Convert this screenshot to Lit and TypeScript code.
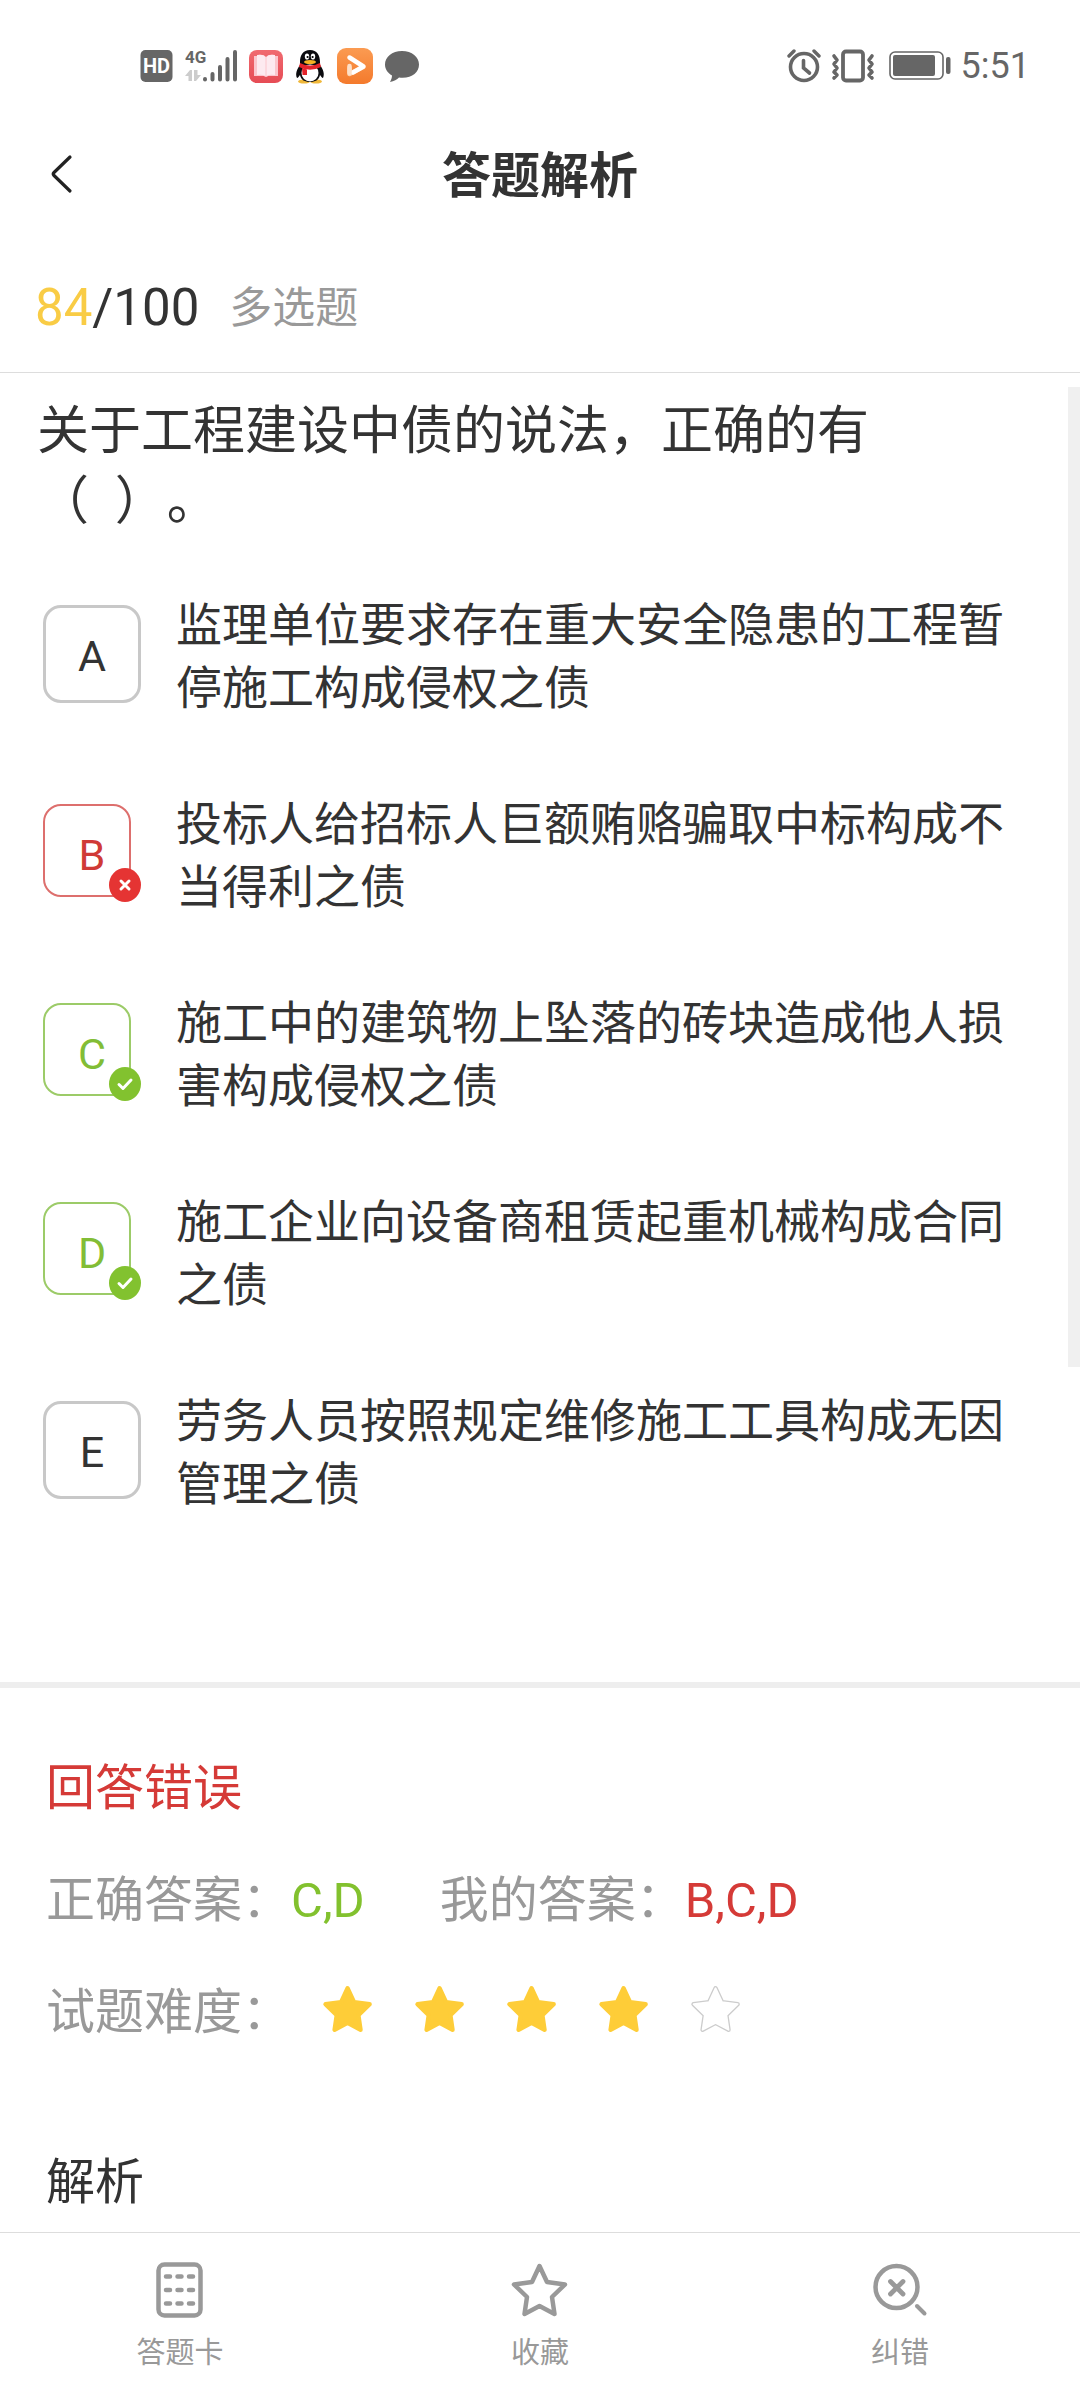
import { LitElement, html, svg, css, nothing } from "lit";
import { customElement, property } from "lit/decorators.js";
import { classMap } from "lit/directives/class-map.js";

type OptionState = "plain" | "wrong" | "right";

interface Option {
  key: string;
  text: string;
  state: OptionState;
}

const OPTIONS: Option[] = [
  { key: "A", text: "监理单位要求存在重大安全隐患的工程暂停施工构成侵权之债", state: "plain" },
  { key: "B", text: "投标人给招标人巨额贿赂骗取中标构成不当得利之债", state: "wrong" },
  { key: "C", text: "施工中的建筑物上坠落的砖块造成他人损害构成侵权之债", state: "right" },
  { key: "D", text: "施工企业向设备商租赁起重机械构成合同之债", state: "right" },
  { key: "E", text: "劳务人员按照规定维修施工工具构成无因管理之债", state: "plain" },
];

const STAR = "M29.5 6 L37 22 L55 24.5 L42 37 L44.5 54 L29.5 46 L14.5 54 L17 37 L4 24.5 L22 22 Z";

@customElement("status-bar")
export class StatusBar extends LitElement {
  static styles = css`
    :host {
      display: flex;
      justify-content: space-between;
      align-items: center;
      padding: 42px 50px 42px 140px;
      color: #666;
    }
    .group {
      display: flex;
      align-items: center;
      height: 48px;
    }
    .left {
      gap: 12px;
    }
    .right {
      gap: 10px;
    }
    svg {
      display: block;
    }
    .battery {
      margin-left: 4px;
    }
    .time {
      font-size: 36px;
      line-height: 48px;
    }
    .label {
      font-family: Roboto, sans-serif;
      font-weight: 700;
    }
  `;

  render() {
    return html`
      <div class="group left">
        <svg width="33" height="36" viewBox="0 0 33 36" aria-hidden="true">
          <rect x="0.5" y="2" width="32" height="32" rx="5" fill="#666" />
          <text class="label" x="16.5" y="25" font-size="20" text-anchor="middle" fill="#fff">HD</text>
        </svg>
        <svg width="52" height="36" viewBox="0 0 52 36" aria-hidden="true">
          <text class="label" x="0" y="15" font-size="17" fill="#666">4G</text>
          <g fill="#ccc">
            <path d="M5 22 L0 28 H3.500 V33 H7 V22 Z" />
            <path d="M9 22 V33 H11 L16 27 H12.500 V22 Z" />
          </g>
          <g stroke="#666" stroke-width="4" stroke-linecap="round">
            <path d="M20 31 V31.500 M27.500 26 V31.500 M35 19 V31.500 M42.500 11 V31.500 M50 4 V31.500" />
          </g>
        </svg>
        <svg width="34" height="36" viewBox="0 0 34 36" aria-hidden="true">
          <defs>
            <linearGradient id="book" x1="0" y1="0" x2="0" y2="1">
              <stop offset="0" stop-color="#f06a70" />
              <stop offset="1" stop-color="#e64c55" />
            </linearGradient>
          </defs>
          <rect x="0" y="2" width="34" height="33" rx="8" fill="url(#book)" />
          <path d="M5 8 H9 V7 Q15 6 17 9 Q19 6 25 7 V8 H29 V28 H19 Q17 30 15 28 H5 Z" fill="#fbc6cd" />
          <path d="M8 7 Q14 6 16.500 9 V28 Q13 26 8 27 Z M26 7 Q20 6 17.500 9 V28 Q21 26 26 27 Z" fill="#fdeaf0" />
        </svg>
        <svg width="30" height="36" viewBox="0 0 30 36" aria-hidden="true">
          <ellipse cx="9" cy="33.500" rx="6" ry="2" fill="#f0b83a" />
          <ellipse cx="21" cy="33.500" rx="6" ry="2" fill="#f0b83a" />
          <path d="M15 2 C8 2 5 7 5 14 L5 17 C2 21 0 26 2 30 C3 30 4 28 5 27 C6 32 10 34 15 34 C20 34 24 32 25 27 C26 28 27 30 28 30 C30 26 28 21 25 17 L25 14 C25 7 22 2 15 2 Z" fill="#0b0b0f" />
          <ellipse cx="15" cy="25" rx="8.500" ry="8.500" fill="#fff" />
          <path d="M5 15 Q15 20 25 15 L26 19 Q15 24.500 4 19 Z" fill="#e3242b" />
          <path d="M7 20 L12 21.500 V27 H7.500 Z" fill="#e3242b" />
          <ellipse cx="12" cy="8.500" rx="2.200" ry="3.100" fill="#fff" />
          <ellipse cx="18" cy="8.500" rx="2.200" ry="3.100" fill="#fff" />
          <circle cx="12.600" cy="9" r="1.100" fill="#000" />
          <circle cx="17.600" cy="9" r="1.100" fill="#000" />
          <ellipse cx="15" cy="14" rx="6" ry="2" fill="#f5b324" />
        </svg>
        <svg width="36" height="36" viewBox="0 0 36 36" aria-hidden="true">
          <defs>
            <linearGradient id="play" x1="0" y1="0" x2="0" y2="1">
              <stop offset="0" stop-color="#fb9b52" />
              <stop offset="1" stop-color="#f47a2c" />
            </linearGradient>
          </defs>
          <rect x="0" y="0" width="36" height="36" rx="9" fill="url(#play)" />
          <g fill="none" stroke-linecap="round" stroke-linejoin="round" stroke-width="4.500">
            <path d="M12.500 20 V26 L26 19" stroke="#fdd0ac" />
            <path d="M12.500 9.500 L26.500 18.500 L16 24.500" stroke="#fff" />
            <path d="M12.500 18 V25" stroke="#fde0c8" />
          </g>
        </svg>
        <svg width="34" height="36" viewBox="0 0 34 36" aria-hidden="true">
          <path d="M17 3 C7 3 0 9 0 16.500 C0 21 2.500 25 7 27.500 C7 30 6 32 5 34 C9 33.500 12 31.500 14 29.500 C26 31 34 25 34 16.500 C34 9 27 3 17 3 Z" fill="#666" />
        </svg>
      </div>
      <div class="group right">
        <svg width="34" height="36" viewBox="0 0 34 36" fill="none" stroke="#666" stroke-linecap="round" aria-hidden="true">
          <circle cx="17" cy="19" r="13.500" stroke-width="3.600" />
          <path d="M16.500 12.500 V20 L22.500 25" stroke-width="3.600" />
          <path d="M2 8 L7 3 M32 8 L27 3" stroke-width="3.400" />
        </svg>
        <svg width="44" height="36" viewBox="0 0 44 36" fill="none" stroke="#666" stroke-linecap="round" stroke-linejoin="round" aria-hidden="true">
          <rect x="12" y="3.500" width="20" height="29" rx="3" stroke-width="3.800" />
          <path d="M3 8 L6 12 L3 16 L6 20 L3 24 L6 27 L3 30 M41 8 L38 12 L41 16 L38 20 L41 24 L38 27 L41 30" stroke-width="3.600" />
        </svg>
        <svg class="battery" width="62" height="36" viewBox="0 0 62 36" aria-hidden="true">
          <rect x="1" y="4" width="53" height="27" rx="5" fill="none" stroke="#666" stroke-width="1.600" />
          <rect x="4" y="7" width="42" height="21" rx="2" fill="#666" />
          <rect x="57" y="9" width="4.500" height="17" rx="2" fill="#666" />
        </svg>
        <span class="time">5:51</span>
      </div>
    `;
  }
}

@customElement("option-row")
export class OptionRow extends LitElement {
  @property({ attribute: false }) option!: Option;

  static styles = css`
    :host {
      display: block;
    }
    .row {
      display: flex;
      align-items: flex-start;
      gap: 35px;
      width: 100%;
      padding: 0 44px 0 43px;
      border: 0;
      background: none;
      color: inherit;
      font: inherit;
      text-align: left;
      cursor: pointer;
    }
    .mark {
      position: relative;
      flex: none;
      display: flex;
      width: 98px;
      height: 98px;
      margin-top: 11px;
    }
    .frame {
      box-sizing: border-box;
      width: 98px;
      height: 98px;
      border: 3px solid #c8c8c8;
      border-radius: 18px;
    }
    .letter {
      position: absolute;
      inset: 0;
      font-size: 43px;
      line-height: 103px;
      text-align: center;
    }
    .judged .frame {
      width: 88px;
      height: 93px;
      border-width: 2px;
    }
    .wrong .frame {
      border-color: #dd6f6d;
    }
    .right .frame {
      border-color: #9ccb68;
    }
    .wrong .letter {
      color: #d03a36;
    }
    .right .letter {
      color: #82bd36;
    }
    .badge {
      position: absolute;
      right: 0;
      bottom: 0;
      width: 32px;
      height: 34px;
    }
    .text {
      flex: 1;
      font-size: 46px;
      line-height: 63px;
    }
  `;

  private badge(state: OptionState) {
    if (state === "plain") return nothing;
    const wrong = state === "wrong";
    return html`
      <svg class="badge" viewBox="0 0 32 34" role="img" aria-label=${wrong ? "错误" : "正确"}>
        <ellipse cx="16" cy="17" rx="16" ry="17" fill=${wrong ? "#e53433" : "#82c22f"} />
        ${wrong
          ? svg`<path d="M12 13 L20 21 M20 13 L12 21" fill="none" stroke="#fff" stroke-width="3" stroke-linecap="round" />`
          : svg`<path d="M10 17.500 L14 21.500 L22 13" fill="none" stroke="#fff" stroke-width="3" stroke-linecap="round" stroke-linejoin="round" />`}
      </svg>
    `;
  }

  render() {
    const { key, text, state } = this.option;
    return html`
      <button class="row" type="button">
        <span class=${classMap({ mark: true, judged: state !== "plain", [state]: true })}>
          <span class="frame"></span>
          <span class="letter">${key}</span>
          ${this.badge(state)}
        </span>
        <span class="text">${text}</span>
      </button>
    `;
  }
}

@customElement("star-rating")
export class StarRating extends LitElement {
  @property({ type: Number }) value = 0;
  @property({ type: Number }) max = 5;

  static styles = css`
    :host {
      display: flex;
      gap: 40px;
    }
    .star {
      display: block;
      width: 52px;
      height: 52px;
      stroke-linejoin: round;
    }
    .full {
      fill: #fecd38;
      stroke: #fecd38;
      stroke-width: 5;
    }
    .edge {
      fill: #ccc;
      stroke: #ccc;
      stroke-width: 5;
    }
    .hollow {
      fill: #fff;
      stroke: #fff;
      stroke-width: 2;
    }
  `;

  render() {
    return Array.from({ length: this.max }, (_, i) => html`
      <svg class="star" viewBox="0 0 60 60" aria-hidden="true">
        ${i < this.value
          ? svg`<path class="full" d=${STAR} />`
          : svg`<path class="edge" d=${STAR} /><path class="hollow" d=${STAR} />`}
      </svg>
    `);
  }
}

@customElement("app-root")
export class AppRoot extends LitElement {
  static styles = css`
    :host {
      display: flex;
      flex-direction: column;
      min-height: 100vh;
      background: #fff;
      color: #333;
      font-family: Roboto, "Noto Sans CJK SC", sans-serif;
      text-spacing-trim: space-all;
    }
    .header {
      display: grid;
      grid-template-columns: 120px 1fr 120px;
      align-items: center;
      height: 84px;
    }
    .back {
      display: flex;
      align-items: center;
      height: 84px;
      padding: 0 0 0 48px;
      border: 0;
      background: none;
      cursor: pointer;
    }
    .title {
      margin: 0;
      padding-top: 6px;
      font-size: 49px;
      font-weight: 700;
      line-height: 60px;
      text-align: center;
    }
    .progress {
      display: flex;
      align-items: center;
      gap: 30px;
      padding: 62px 35px 34px;
      border-bottom: 1px solid #ddd;
      line-height: 60px;
    }
    .count {
      font-size: 51px;
    }
    .current {
      color: #f9cc45;
    }
    .kind {
      color: #999;
      font-size: 43px;
    }
    .question {
      position: relative;
      padding: 24px 0 166px;
      border-bottom: 6px solid #eee;
    }
    .stem {
      margin: 0 56px 57px 37px;
      font-size: 52px;
      font-weight: 400;
      line-height: 70px;
    }
    .options {
      display: flex;
      flex-direction: column;
      gap: 73px;
      margin: 0;
      padding: 0;
      list-style: none;
    }
    .scrollbar {
      position: absolute;
      top: 14px;
      right: 0;
      width: 12px;
      height: 980px;
      background: #f0f0f0;
    }
    .result {
      display: flex;
      flex-direction: column;
      gap: 52px;
      padding: 71px 46px 17px;
      font-size: 49px;
      line-height: 60px;
    }
    .verdict {
      margin: 0;
    }
    .line {
      display: flex;
      align-items: center;
      color: #999;
    }
    .pair {
      margin-right: 75px;
    }
    .red {
      color: #d53a37;
    }
    .green {
      color: #82c12e;
    }
    .stars {
      margin: 0 0 8px 31px;
    }
    .analysis {
      margin: 58px 0 0;
      font-size: 49px;
      font-weight: 400;
      line-height: 60px;
    }
    .nav {
      display: grid;
      grid-template-columns: repeat(3, 1fr);
      margin-top: auto;
      border-top: 1px solid #ddd;
    }
    .tab {
      display: flex;
      flex-direction: column;
      align-items: center;
      gap: 16px;
      padding: 27px 0 30px;
      border: 0;
      background: none;
      color: #999;
      font: inherit;
      font-size: 29px;
      line-height: 34px;
      cursor: pointer;
    }
    .icon {
      display: block;
      width: 60px;
      height: 60px;
      fill: none;
      stroke: #999;
      stroke-linecap: round;
      stroke-linejoin: round;
    }
  `;

  render() {
    return html`
      <status-bar></status-bar>
      <header class="header">
        <button class="back" type="button" aria-label="返回">
          <svg width="28" height="42" viewBox="0 0 28 42" aria-hidden="true">
            <path d="M22 4 L6 19.500 Q4.500 21 6 22.500 L22 38" fill="none" stroke="#222" stroke-width="3.200" stroke-linecap="round" />
          </svg>
        </button>
        <h1 class="title">答题解析</h1>
      </header>
      <div class="progress">
        <span class="count"><span class="current">84</span>/100</span>
        <span class="kind">多选题</span>
      </div>
      <main>
        <section class="question">
          <h2 class="stem">关于工程建设中债的说法，正确的有<br />（&nbsp; ）。</h2>
          <ul class="options">
            ${OPTIONS.map((o) => html`<li><option-row .option=${o}></option-row></li>`)}
          </ul>
          <div class="scrollbar"></div>
        </section>
        <section class="result">
          <p class="verdict red">回答错误</p>
          <div class="line">
            <span class="pair">正确答案：<span class="green">C,D</span></span>
            <span class="pair">我的答案：<span class="red">B,C,D</span></span>
          </div>
          <div class="line">
            试题难度：<star-rating class="stars" value="4"></star-rating>
          </div>
          <h2 class="analysis">解析</h2>
        </section>
      </main>
      <nav class="nav">
        <button class="tab" type="button">
          <svg class="icon" viewBox="0 0 60 60" aria-hidden="true">
            <rect x="8.500" y="4.500" width="42" height="51" rx="6" stroke-width="4.500" />
            <path d="M16 16.500 H20 M27.500 16.500 H31.500 M39 16.500 H43 M16 30 H20 M27.500 30 H31.500 M39 30 H43 M16 43.500 H20 M27.500 43.500 H31.500 M39 43.500 H43" stroke-width="4.500" />
          </svg>
          答题卡
        </button>
        <button class="tab" type="button">
          <svg class="icon" viewBox="0 0 60 60" aria-hidden="true">
            <path d=${STAR} stroke-width="4.500" />
          </svg>
          收藏
        </button>
        <button class="tab" type="button">
          <svg class="icon" viewBox="0 0 60 60" aria-hidden="true">
            <circle cx="26.500" cy="27" r="21" stroke-width="4.500" />
            <path d="M20.500 21.500 L33 34 M33 21.500 L20.500 34" stroke-width="4.800" />
            <path d="M47 46 L54.500 53.500" stroke-width="4" />
          </svg>
          纠错
        </button>
      </nav>
    `;
  }
}
